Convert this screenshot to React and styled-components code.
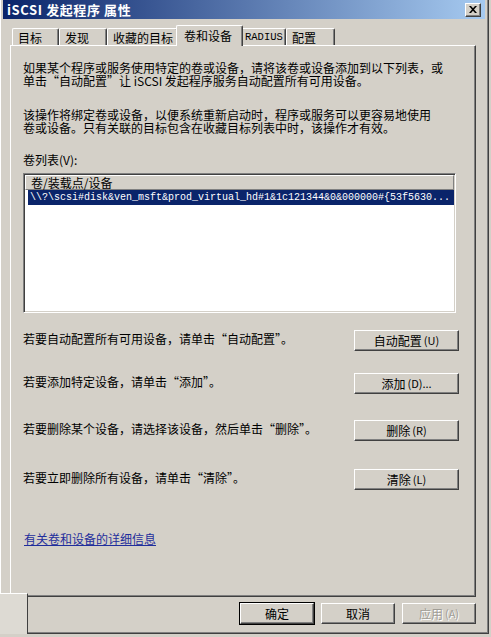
import React from 'react';
import styled, { createGlobalStyle } from 'styled-components';

const cjk = `"Noto Sans CJK SC", "Liberation Sans", sans-serif`;
const mono = `"Liberation Mono", "Noto Sans CJK SC", monospace`;

const Global = createGlobalStyle`
  html, body {
    margin: 0;
    padding: 0;
    background: #d4d0c8;
  }
  body {
    font-family: ${cjk};
    font-size: 12px;
    color: #000;
  }
`;

const Window = styled.div`
  position: relative;
  box-sizing: border-box;
  width: 489px;
  height: 634px;
  padding: 0 3px 3px 3px;
  background: #d4d0c8;
  border-right: 1px solid #404040;
  border-bottom: 1px solid #404040;
  box-shadow: inset -1px -1px #808080, inset 1px 0 #ffffff;
`;

const TitleBar = styled.div`
  height: 19px;
  display: flex;
  align-items: center;
  justify-content: space-between;
  padding: 0 4px 0 4px;
  background: linear-gradient(to right, #0a246a, #a6caf0);
`;

const Title = styled.span`
  color: #fff;
  font-weight: bold;
  font-size: 13px;
  line-height: 19px;
  letter-spacing: 0.6px;
`;

const CloseBtn = styled.div`
  box-sizing: border-box;
  width: 16px;
  height: 14px;
  display: flex;
  align-items: center;
  justify-content: center;
  background: #d4d0c8;
  border-top: 1px solid #fff;
  border-left: 1px solid #fff;
  border-right: 1px solid #404040;
  border-bottom: 1px solid #404040;
  box-shadow: inset -1px -1px #808080;
`;

const Body = styled.div`
  padding: 5px 9px 0 7px;
`;

const TabStrip = styled.div`
  position: relative;
  z-index: 1;
  height: 21px;
  display: flex;
  align-items: flex-end;
  padding-left: 2px;
`;

const Tab = styled.div`
  position: relative;
  box-sizing: border-box;
  width: ${(p) => (p.$active ? p.$w + 4 : p.$w)}px;
  height: ${(p) => (p.$active ? 21 : 17)}px;
  margin: ${(p) => (p.$active ? '0 -2px -1px -2px' : '0')};
  z-index: ${(p) => (p.$active ? 2 : 1)};
  padding: ${(p) => (p.$active ? '2px 0 0 7px' : p.$mono ? '1px 0 0 3px' : '1px 0 0 5px')};
  background: #d4d0c8;
  border-top: 1px solid #fff;
  border-left: 1px solid #fff;
  border-right: 1px solid #404040;
  border-radius: 2px 2px 0 0;
  box-shadow: inset -1px 0 #808080;
  font-family: ${(p) => (p.$mono ? mono : cjk)};
  font-size: ${(p) => (p.$mono ? '10.5px' : '12px')};
  line-height: 15px;
  white-space: nowrap;
`;

const Panel = styled.div`
  box-sizing: border-box;
  width: 466px;
  height: 552px;
  padding: 15px 16px 0 12px;
  border-top: 1px solid #fff;
  border-left: 1px solid #fff;
  border-right: 1px solid #404040;
  border-bottom: 1px solid #404040;
  box-shadow: inset -1px -1px #808080;
  display: flex;
  flex-direction: column;
`;

const Para = styled.p`
  margin: ${(p) => p.$mt || 0}px 0 0 0;
  line-height: 13px;
  font-size: 12px;
  white-space: pre-line;
`;

const ListBox = styled.div`
  box-sizing: border-box;
  width: 433px;
  height: 140px;
  margin-top: 7px;
  background: #fff;
  border: 1px solid;
  border-color: #808080 #fff #fff #808080;
  box-shadow: inset 1px 1px #404040, inset -1px -1px #d4d0c8;
  padding: 1px 1px 0 1px;
`;

const ListHeader = styled.div`
  box-sizing: border-box;
  height: 15px;
  padding-left: 5px;
  line-height: 14px;
  background: #d4d0c8;
  border-top: 1px solid #fff;
  border-left: 1px solid #fff;
  border-bottom: 1px solid #808080;
  border-right: 1px solid #808080;
`;

const ListRow = styled.div`
  height: 15px;
  margin-left: 3px;
  padding-left: 2px;
  line-height: 15px;
  font-family: ${mono};
  font-size: 10px;
  white-space: nowrap;
  background: ${(p) => (p.$selected ? '#0a246a' : 'transparent')};
  color: ${(p) => (p.$selected ? '#fff' : '#000')};
`;

const ActionRow = styled.div`
  display: flex;
  align-items: center;
  justify-content: space-between;
  margin-top: ${(p) => p.$mt}px;
  height: 21px;
`;

const ActionText = styled.span`
  line-height: 13px;
  margin-top: -5px;
`;

const Button = styled.div`
  box-sizing: border-box;
  width: ${(p) => p.$w}px;
  height: 21px;
  display: flex;
  align-items: center;
  justify-content: center;
  background: #d4d0c8;
  border-top: 1px solid #fff;
  border-left: 1px solid #fff;
  border-right: 1px solid #404040;
  border-bottom: 1px solid #404040;
  box-shadow: inset -1px -1px #808080
    ${(p) => (p.$default ? ', 0 0 0 1px #000' : '')};
  color: ${(p) => (p.$disabled ? '#a09d96' : '#000')};
  text-shadow: ${(p) => (p.$disabled ? '1px 1px #fff' : 'none')};
  font-size: 12px;
  line-height: 13px;
  white-space: nowrap;
`;

const Mnemonic = styled.span`
  font-size: 11px;
  margin-left: 2px;
`;

const InfoLink = styled.a`
  margin: 42px 0 0 1px;
  align-self: flex-start;
  color: #1f2e9c;
  text-decoration: underline;
  line-height: 13px;
  cursor: pointer;
`;

const Footer = styled.div`
  display: flex;
  justify-content: flex-end;
  gap: 7px;
  padding-top: 6px;
  width: 466px;
`;

const Scrap = styled.div`
  position: absolute;
  left: 0;
  top: 593px;
  width: 27px;
  height: 40px;
  background: #dddad3;
  border-top: 1px solid #fff;
  border-right: 1px solid #404040;
`;

const tabs = [
  { label: '目标', w: 47 },
  { label: '发现', w: 48 },
  { label: '收藏的目标', w: 71 },
  { label: '卷和设备', w: 63, active: true },
  { label: 'RADIUS', w: 45, mono: true },
  { label: '配置', w: 49 },
];

const actions = [
  { text: '若要自动配置所有可用设备，请单击“自动配置”。', btn: '自动配置', key: 'U', mt: 17 },
  { text: '若要添加特定设备，请单击“添加”。', btn: '添加', key: 'D', tail: '...', mt: 22 },
  { text: '若要删除某个设备，请选择该设备，然后单击“删除”。', btn: '删除', key: 'R', mt: 26 },
  { text: '若要立即删除所有设备，请单击“清除”。', btn: '清除', key: 'L', mt: 28 },
];

const App = () => {
  return (
    <>
      <Global />
      <Window>
        <TitleBar>
          <Title>iSCSI 发起程序 属性</Title>
          <CloseBtn>
            <svg width="8" height="7" viewBox="0 0 8 7">
              <path d="M0 0h2l2 2.2L6 0h2L5 3.5 8 7H6L4 4.8 2 7H0l3-3.5z" fill="#000" />
            </svg>
          </CloseBtn>
        </TitleBar>
        <Body>
          <TabStrip>
            {tabs.map((t) => (
              <Tab key={t.label} $w={t.w} $active={t.active} $mono={t.mono}>
                {t.label}
              </Tab>
            ))}
          </TabStrip>
          <Panel>
            <Para>
              {'如果某个程序或服务使用特定的卷或设备，请将该卷或设备添加到以下列表，或\n单击“自动配置”让 iSCSI 发起程序服务自动配置所有可用设备。'}
            </Para>
            <Para $mt={21}>
              {'该操作将绑定卷或设备，以便系统重新启动时，程序或服务可以更容易地使用\n卷或设备。只有关联的目标包含在收藏目标列表中时，该操作才有效。'}
            </Para>
            <Para $mt={19}>卷列表(V):</Para>
            <ListBox>
              <ListHeader>卷/装载点/设备</ListHeader>
              <ListRow $selected>
                {'\\\\?\\scsi#disk&ven_msft&prod_virtual_hd#1&1c121344&0&000000#{53f5630...'}
              </ListRow>
            </ListBox>
            {actions.map((a) => (
              <ActionRow key={a.btn} $mt={a.mt}>
                <ActionText>{a.text}</ActionText>
                <Button $w={105}>
                  {a.btn}
                  <Mnemonic>({a.key}){a.tail}</Mnemonic>
                </Button>
              </ActionRow>
            ))}
            <InfoLink>有关卷和设备的详细信息</InfoLink>
          </Panel>
          <Footer>
            <Button $w={74} $default>确定</Button>
            <Button $w={74}>取消</Button>
            <Button $w={74} $disabled>
              应用<Mnemonic>(A)</Mnemonic>
            </Button>
          </Footer>
        </Body>
        <Scrap />
      </Window>
    </>
  );
};

export default App;
